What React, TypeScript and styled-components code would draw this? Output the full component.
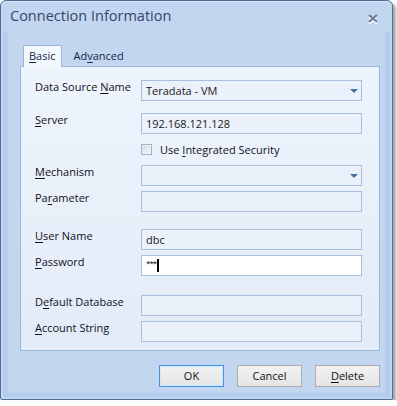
import React from "react";
import styled, { createGlobalStyle } from "styled-components";

const Global = createGlobalStyle`
  html, body { margin: 0; padding: 0; background: #ffffff; }
  body { font-family: "Open Sans", "Noto Sans", sans-serif; }
  * { box-sizing: border-box; }
`;

const Win = styled.div`
  width: 393px;
  height: 400px;
  border: 1px solid #4f6f96;
  border-radius: 6px 6px 2px 2px;
  background: #c3d6f0;
  box-shadow: 3px 3px 3px rgba(0, 0, 0, 0.35), inset 0 1px 0 #dbe7f7;
  display: flex;
  flex-direction: column;
  padding: 0 2px 2px 2px;
`;

const TitleBar = styled.div`
  height: 31px;
  flex: none;
  display: flex;
  align-items: center;
  justify-content: space-between;
  padding: 0 11px 0 7px;
`;

const Title = styled.div`
  font-size: 14.5px;
  color: #34466a;
  line-height: 20px;
  margin-top: -1px;
`;

const Close = styled.div`
  width: 13px;
  height: 11px;
  display: flex;
  align-items: center;
  justify-content: center;
  margin-top: 3px;
`;

const Frame = styled.div`
  flex: 1;
  border: 5px solid #b4ccee;
  border-top: 0;
  border-bottom-width: 4px;
  display: flex;
  flex-direction: column;
  padding: 13px 5px 0 12px;
`;

const Tabs = styled.div`
  display: flex;
  height: 21px;
  padding-left: 3px;
  align-items: flex-end;
`;

const Tab = styled.div<{ $active?: boolean }>`
  height: ${(p) => (p.$active ? "22px" : "21px")};
  margin-bottom: ${(p) => (p.$active ? "-1px" : "0")};
  padding: 0 ${(p) => (p.$active ? "5px" : "7px")};
  margin-left: ${(p) => (p.$active ? "0" : "4px")};
  font-size: 11px;
  line-height: 20px;
  color: #15284a;
  border: 1px solid ${(p) => (p.$active ? "#9bb5da" : "transparent")};
  border-bottom: 0;
  border-radius: 2px 2px 0 0;
  background: ${(p) => (p.$active ? "#f3f8fe" : "transparent")};
  position: relative;
  z-index: 1;
`;

const U = styled.span`
  text-decoration: underline;
  text-underline-offset: 2px;
`;

const Panel = styled.div`
  height: 285px;
  flex: none;
  border: 1px solid #9db7db;
  background: linear-gradient(#eef4fc, #e3ebf7);
  padding: 13px 0 0 14px;
  display: flex;
  flex-direction: column;
`;

const Row = styled.div<{ $mt: number }>`
  display: flex;
  align-items: flex-start;
  margin-top: ${(p) => p.$mt}px;
`;

const Label = styled.div`
  width: 106px;
  flex: none;
  font-size: 11px;
  line-height: 15px;
  margin-top: -1px;
  color: #111122;
  white-space: nowrap;
`;

const Field = styled.div<{ $white?: boolean }>`
  width: 221px;
  height: 21px;
  border: 1px solid #a9bfdd;
  background: ${(p) => (p.$white ? "#ffffff" : "#eaf1fa")};
  font-size: 11px;
  line-height: 19px;
  padding: 0 4px;
  color: #1a1a1a;
  display: flex;
  align-items: center;
  justify-content: space-between;
  white-space: nowrap;
`;

const Arrow = styled.div`
  width: 0;
  height: 0;
  border-left: 4px solid transparent;
  border-right: 4px solid transparent;
  border-top: 4px solid #4b6e9f;
  margin-right: -1px;
`;

const CheckRow = styled.div`
  display: flex;
  align-items: center;
  margin-top: 10px;
  margin-left: 106px;
  height: 11px;
  gap: 8px;
`;

const Box = styled.div`
  width: 11px;
  height: 11px;
  border: 1px solid #9fb2cc;
  background: linear-gradient(135deg, #d6d9de, #f4f5f7);
  box-shadow: inset 0 0 0 1px #eef0f3;
`;

const CheckText = styled.div`
  font-size: 11px;
  line-height: 15px;
  color: #111122;
`;

const Secret = styled.div`
  display: flex;
  align-items: center;
  height: 19px;
`;

const Stars = styled.span`
  font-size: 8px;
  letter-spacing: -1px;
  line-height: 8px;
  margin-top: -5px;
  color: #000;
`;

const Caret = styled.span`
  display: inline-block;
  width: 2px;
  height: 13px;
  background: #000;
  margin-left: 1px;
`;

const Buttons = styled.div`
  display: flex;
  justify-content: flex-end;
  gap: 13px;
  margin-top: 14px;
`;

const Button = styled.div<{ $default?: boolean }>`
  width: 65px;
  height: 22px;
  border: 1px solid ${(p) => (p.$default ? "#3d95ea" : "#acacac")};
  box-shadow: ${(p) => (p.$default ? "inset 0 0 0 1px #cfe6fb" : "none")};
  background: linear-gradient(#f2f2f2, #e5e5e5);
  font-size: 11px;
  line-height: 18px;
  color: #111;
  display: flex;
  align-items: center;
  justify-content: center;
  padding-bottom: 1px;
`;

export default function App() {
  return (
    <>
      <Global />
      <Win>
        <TitleBar>
          <Title>Connection Information</Title>
          <Close>
            <svg width="12" height="11" viewBox="0 0 12 11">
              <path d="M2 2.5 L10 9.5 M10 2.5 L2 9.5" stroke="#ffffff" strokeWidth="2.2" transform="translate(0 1)" />
              <path d="M2 2 L10 9 M10 2 L2 9" stroke="#6d7f9b" strokeWidth="2.2" />
            </svg>
          </Close>
        </TitleBar>
        <Frame>
          <Tabs>
            <Tab $active>
              <U>B</U>asic
            </Tab>
            <Tab>
              Ad<U>v</U>anced
            </Tab>
          </Tabs>
          <Panel>
            <Row $mt={0}>
              <Label>
                Data Source <U>N</U>ame
              </Label>
              <Field>
                <span>Teradata - VM</span>
                <Arrow />
              </Field>
            </Row>
            <Row $mt={12}>
              <Label>
                <U>S</U>erver
              </Label>
              <Field>192.168.121.128</Field>
            </Row>
            <CheckRow>
              <Box />
              <CheckText>
                Use <U>I</U>ntegrated Security
              </CheckText>
            </CheckRow>
            <Row $mt={10}>
              <Label>
                <U>M</U>echanism
              </Label>
              <Field>
                <span />
                <Arrow />
              </Field>
            </Row>
            <Row $mt={5}>
              <Label>
                Pa<U>r</U>ameter
              </Label>
              <Field />
            </Row>
            <Row $mt={17}>
              <Label>
                <U>U</U>ser Name
              </Label>
              <Field>dbc</Field>
            </Row>
            <Row $mt={5}>
              <Label>
                <U>P</U>assword
              </Label>
              <Field $white>
                <Secret>
                  <Stars>***</Stars>
                  <Caret />
                </Secret>
              </Field>
            </Row>
            <Row $mt={19}>
              <Label>
                D<U>e</U>fault Database
              </Label>
              <Field />
            </Row>
            <Row $mt={5}>
              <Label>
                <U>A</U>ccount String
              </Label>
              <Field />
            </Row>
          </Panel>
          <Buttons>
            <Button $default>OK</Button>
            <Button>Cancel</Button>
            <Button>
              <span>
                <U>D</U>elete
              </span>
            </Button>
          </Buttons>
        </Frame>
      </Win>
    </>
  );
}
